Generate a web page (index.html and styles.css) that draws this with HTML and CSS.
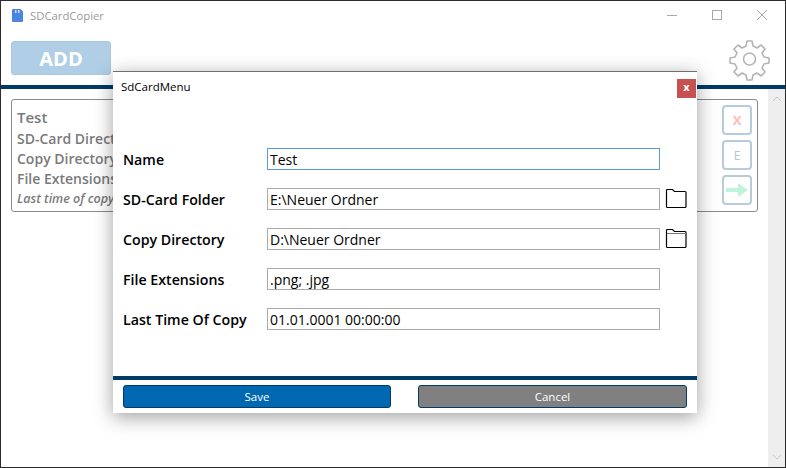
FILE: index.html
```html
<!DOCTYPE html>
<html lang="en">
<head>
    <meta charset="UTF-8">
    <title>SDCardCopier</title>
    <link rel="stylesheet" href="styles.css">
</head>
<body>
<div class="window">
    <header class="titlebar">
        <svg class="app-icon" width="11" height="13" viewBox="0 0 11 13"><path d="M1 0h7.500L11 2.500V12a1 1 0 0 1-1 1H1a1 1 0 0 1-1-1V1a1 1 0 0 1 1-1z" fill="#4a86e0"/><rect x="3" y="1" width="1.500" height="3" fill="#cfe0f8"/><rect x="6" y="1" width="1.500" height="3" fill="#cfe0f8"/></svg>
        <span class="app-title">SDCardCopier</span>
        <div class="win-controls">
            <svg width="16" height="16" viewBox="0 0 16 16"><path d="M3 8.500h10" stroke="#a8a8a8" fill="none"/></svg>
            <svg width="16" height="16" viewBox="0 0 16 16"><rect x="3.500" y="3.500" width="9" height="9" stroke="#a8a8a8" fill="none"/></svg>
            <svg width="16" height="16" viewBox="0 0 16 16"><path d="M3 3l10 10M13 3L3 13" stroke="#a8a8a8" fill="none"/></svg>
        </div>
    </header>
    <div class="toolbar">
        <button class="add-btn">ADD</button>
        <svg class="gear" width="42" height="42" viewBox="0 0 42 42">
            <path d="M18 2h5l1 5 4 2 4-3 4 4-3 4 2 4 5 1v5l-5 1-2 4 3 4-4 4-4-3-4 2-1 5h-5l-1-5-4-2-4 3-4-4 3-4-2-4-5-1v-5l5-1 2-4-3-4 4-4 4 3 4-2z" fill="none" stroke="#b4b4b4" stroke-width="1.600" stroke-linejoin="round"/>
            <circle cx="20.500" cy="20" r="6" fill="none" stroke="#b4b4b4" stroke-width="1.600"/>
        </svg>
    </div>
    <div class="content">
        <main class="list">
            <section class="card">
                <div class="card-text">
                    <div class="card-name">Test</div>
                    <div>SD-Card Directory</div>
                    <div>Copy Directory</div>
                    <div>File Extensions</div>
                    <div class="card-last">Last time of copy</div>
                </div>
                <div class="card-actions">
                    <button class="mini-btn mini-x">X</button>
                    <button class="mini-btn mini-e">E</button>
                    <button class="mini-btn">
                        <svg width="22" height="14" viewBox="0 0 22 14"><path d="M0 5h12V0l10 7-10 7V9H0z" fill="#bff3da"/></svg>
                    </button>
                </div>
            </section>
        </main>
        <div class="scrollbar">
            <svg width="10" height="6" viewBox="0 0 10 6"><path d="M1 5l4-4 4 4" fill="none" stroke="#c8c8c8"/></svg>
            <svg width="10" height="6" viewBox="0 0 10 6"><path d="M1 1l4 4 4-4" fill="none" stroke="#c8c8c8"/></svg>
        </div>
    </div>

    <div class="dialog">
        <div class="dialog-head">
            <span class="dialog-title">SdCardMenu</span>
            <button class="dialog-close">x</button>
        </div>
        <form class="dialog-form">
            <label>Name</label>
            <input class="focused" type="text" value="Test">
            <span></span>
            <label>SD-Card Folder</label>
            <input type="text" value="E:\Neuer Ordner">
            <svg class="folder" width="23" height="21" viewBox="0 0 23 21"><path d="M1.500 2.500a1 1 0 0 1 1-1h5l2 2h10.500a1 1 0 0 1 1 1V18.500a1 1 0 0 1-1 1h-17.500a1 1 0 0 1-1-1z" fill="#fff" stroke="#000" stroke-width="1.200"/></svg>
            <label>Copy Directory</label>
            <input type="text" value="D:\Neuer Ordner">
            <svg class="folder" width="23" height="21" viewBox="0 0 23 21"><path d="M1.500 2.500a1 1 0 0 1 1-1h5l2 2h10.500a1 1 0 0 1 1 1V18.500a1 1 0 0 1-1 1h-17.500a1 1 0 0 1-1-1z" fill="#fff" stroke="#000" stroke-width="1.200"/><path d="M2 5.500h19" stroke="#777"/></svg>
            <label>File Extensions</label>
            <input type="text" value=".png; .jpg">
            <span></span>
            <label>Last Time Of Copy</label>
            <input type="text" value="01.01.0001 00:00:00">
            <span></span>
        </form>
        <div class="dialog-foot">
            <button class="foot-btn save">Save</button>
            <button class="foot-btn cancel">Cancel</button>
        </div>
    </div>
</div>
</body>
</html>
```

FILE: styles.css
```css
* {
    box-sizing: border-box;
}
html, body {
    margin: 0;
    padding: 0;
}
body {
    font-family: 'Open Sans', 'Noto Sans', sans-serif;
    color: #000;
    background: #fff;
}
button, input {
    font-family: inherit;
}
.window {
    position: relative;
    width: 786px;
    height: 468px;
    display: flex;
    flex-direction: column;
    border: 1px solid #2b2b2b;
    overflow: hidden;
}
.titlebar {
    height: 28px;
    flex: none;
    display: flex;
    align-items: center;
    padding-left: 11px;
}
.app-title {
    margin-left: 7px;
    font-size: 11.300px;
    color: #9a9a9a;
}
.win-controls {
    margin-left: auto;
    display: flex;
    gap: 29px;
    padding-right: 15px;
}
.toolbar {
    height: 60px;
    flex: none;
    display: flex;
    align-items: flex-start;
    justify-content: space-between;
    padding: 12px 14px 0 10px;
    border-bottom: 4px solid #003a66;
}
.add-btn {
    width: 100px;
    height: 34px;
    background: #b0cfe6;
    border: 1px solid #a9c9e0;
    border-radius: 3px;
    color: #fff;
    font-size: 20px;
    font-weight: 700;
    padding: 0;
}
.gear {
    margin-top: -2px;
}
.content {
    flex: 1;
    display: flex;
    min-height: 0;
}
.list {
    flex: 1;
    padding: 10px 10px 0 10px;
}
.card {
    height: 113px;
    display: flex;
    justify-content: space-between;
    border: 1px solid #8a8a8a;
    border-radius: 3px;
    padding: 5px;
    color: #7a7a7a;
    font-size: 14px;
    font-weight: 600;
    line-height: 20px;
}
/* the dialog covers the rest of these lines */
.card-text {
    width: 96px;
    overflow: hidden;
    white-space: nowrap;
}
.card-name {
    font-size: 15px;
    line-height: 24px;
}
.card-last {
    font-size: 12.500px;
    font-style: italic;
}
.card-actions {
    display: flex;
    flex-direction: column;
    gap: 5px;
}
.mini-btn {
    width: 30px;
    height: 30px;
    padding: 0;
    background: #fff;
    border: 2px solid #b7cbdb;
    border-radius: 4px;
    display: flex;
    align-items: center;
    justify-content: center;
}
.mini-x {
    color: #ffb9b9;
    font-size: 13px;
    font-weight: 700;
}
.mini-e {
    color: #b9c4cc;
    font-size: 12px;
}
.scrollbar {
    width: 17px;
    flex: none;
    background: #eeeeee;
    display: flex;
    flex-direction: column;
    justify-content: space-between;
    align-items: center;
    padding: 7px 0;
}
/* modal sits over the main window */
.dialog {
    position: absolute;
    left: 112px;
    top: 70px;
    width: 584px;
    height: 342px;
    background: #fff;
    border-top: 1px solid #707070;
    box-shadow: 0 4px 18px rgba(0, 0, 0, 0.38);
    display: flex;
    flex-direction: column;
}
.dialog-head {
    height: 27px;
    flex: none;
    display: flex;
    justify-content: space-between;
    align-items: flex-start;
    padding: 7px 1px 0 8px;
    font-size: 11.500px;
    line-height: 17px;
}
.dialog-title {
    margin-top: -1px;
}
.dialog-close {
    width: 19px;
    height: 19px;
    padding: 0 0 3px;
    border: 0;
    background: #c75050;
    color: #fff;
    font-size: 11px;
    font-weight: 700;
    line-height: 14px;
}
.dialog-form {
    flex: 1;
    display: grid;
    grid-template-columns: 144px 393px 28px;
    grid-auto-rows: 22px;
    row-gap: 18px;
    align-items: center;
    padding: 49px 0 0 10px;
}
.dialog-form label {
    font-size: 14.200px;
    font-weight: 600;
}
.dialog-form input {
    height: 22px;
    width: 393px;
    border: 1px solid #aaaaaa;
    padding: 0 2px;
    font-size: 14px;
    color: #000;
    outline: none;
}
.dialog-form input.focused {
    border-color: #5b9bd5;
}
.folder {
    margin: -2px 0 0 5px;
}
.dialog-foot {
    height: 37px;
    flex: none;
    border-top: 4px solid #003a66;
    display: flex;
    justify-content: space-between;
    padding: 5px 10px 0 10px;
}
.foot-btn {
    height: 23px;
    padding: 0;
    color: #fff;
    font-size: 11.500px;
    border: 1px solid #003a66;
    border-radius: 3px;
}
.save {
    width: 268px;
    background: #0068b0;
}
.cancel {
    width: 269px;
    background: #808080;
}
```
